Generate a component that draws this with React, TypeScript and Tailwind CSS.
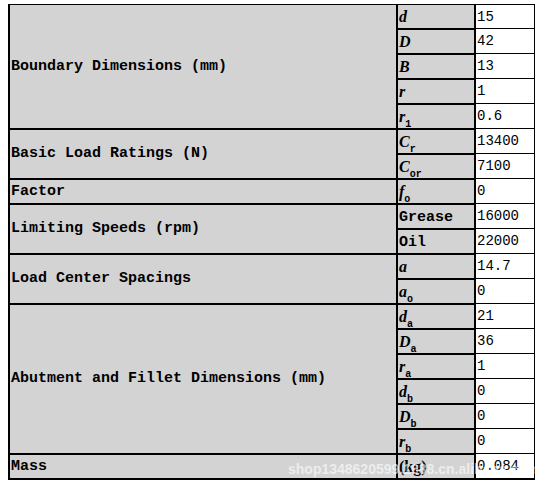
import React from 'react';

type Row = { sym: React.ReactNode; val: string };
type Section = { label: string; rows: Row[] };

const Sym: React.FC<{ b: string; s?: string }> = ({ b, s }) => (
    <span className="font-['Liberation_Serif',serif] italic font-bold text-[16px] leading-[18px]">
        {b}
        {s && (
            <span className="relative top-[5px] not-italic font-['Liberation_Mono',monospace] font-bold text-[10px] leading-none">
                {s}
            </span>
        )}
    </span>
);

const Word: React.FC<{ t: string }> = ({ t }) => (
    <span className="font-['Liberation_Mono',monospace] font-bold text-[15px] leading-[18px]">{t}</span>
);

const sections: Section[] = [
    {
        label: 'Boundary Dimensions (mm)',
        rows: [
            { sym: <Sym b="d" />, val: '15' },
            { sym: <Sym b="D" />, val: '42' },
            { sym: <Sym b="B" />, val: '13' },
            { sym: <Sym b="r" />, val: '1' },
            { sym: <Sym b="r" s="1" />, val: '0.6' },
        ],
    },
    {
        label: 'Basic Load Ratings (N)',
        rows: [
            { sym: <Sym b="C" s="r" />, val: '13400' },
            { sym: <Sym b="C" s="or" />, val: '7100' },
        ],
    },
    { label: 'Factor', rows: [{ sym: <Sym b="f" s="o" />, val: '0' }] },
    {
        label: 'Limiting Speeds (rpm)',
        rows: [
            { sym: <Word t="Grease" />, val: '16000' },
            { sym: <Word t="Oil" />, val: '22000' },
        ],
    },
    {
        label: 'Load Center Spacings',
        rows: [
            { sym: <Sym b="a" />, val: '14.7' },
            { sym: <Sym b="a" s="o" />, val: '0' },
        ],
    },
    {
        label: 'Abutment and Fillet Dimensions (mm)',
        rows: [
            { sym: <Sym b="d" s="a" />, val: '21' },
            { sym: <Sym b="D" s="a" />, val: '36' },
            { sym: <Sym b="r" s="a" />, val: '1' },
            { sym: <Sym b="d" s="b" />, val: '0' },
            { sym: <Sym b="D" s="b" />, val: '0' },
            { sym: <Sym b="r" s="b" />, val: '0' },
        ],
    },
    {
        label: 'Mass',
        rows: [
            {
                sym: <span className="font-['Liberation_Serif',serif] font-bold text-[16px] leading-[18px]">(kg)</span>,
                val: '0.084',
            },
        ],
    },
];

export default function App() {
    return (
        <div className="bg-white w-[541px] h-[488px] pl-[8px] pt-[4px]">
            <div className="relative w-[526px]">
                <table className="table-fixed w-[526px] border-separate border-spacing-0 border-l border-b border-black leading-[18px]">
                    <colgroup>
                        <col className="w-[388px]" />
                        <col className="w-[78px]" />
                        <col className="w-[60px]" />
                    </colgroup>
                    <tbody>
                        {sections.map((sec) =>
                            sec.rows.map((row, i) => (
                                <tr key={sec.label + i} className="h-[25px]">
                                    {i === 0 && (
                                        <td
                                            rowSpan={sec.rows.length}
                                            className="bg-[#d3d3d3] border border-black px-[1px] p-0 align-middle font-['Liberation_Mono',monospace] font-bold text-[15px] leading-[18px] text-black whitespace-nowrap"
                                        >
                                            {sec.label}
                                        </td>
                                    )}
                                    <td className="bg-[#d3d3d3] border border-black px-[1px] py-0 align-middle text-black whitespace-nowrap leading-[18px]">
                                        {row.sym}
                                    </td>
                                    <td
                                        className={`bg-white border-l border-r border-b border-black px-[1px] py-0 align-middle font-['Liberation_Mono',monospace] text-[14px] leading-[18px] text-black whitespace-nowrap ${
                                            sec.label === 'Boundary Dimensions (mm)' && i === 0 ? 'border-t' : ''
                                        }`}
                                    >
                                        {row.val}
                                    </td>
                                </tr>
                            ))
                        )}
                    </tbody>
                </table>
                <span className="absolute left-[280px] top-[455px] font-['Liberation_Sans',sans-serif] font-bold text-[14px] text-white/60 pointer-events-none whitespace-nowrap">
                    shop1348620599.1688.cn.alibaba.com
                </span>
            </div>
        </div>
    );
}
